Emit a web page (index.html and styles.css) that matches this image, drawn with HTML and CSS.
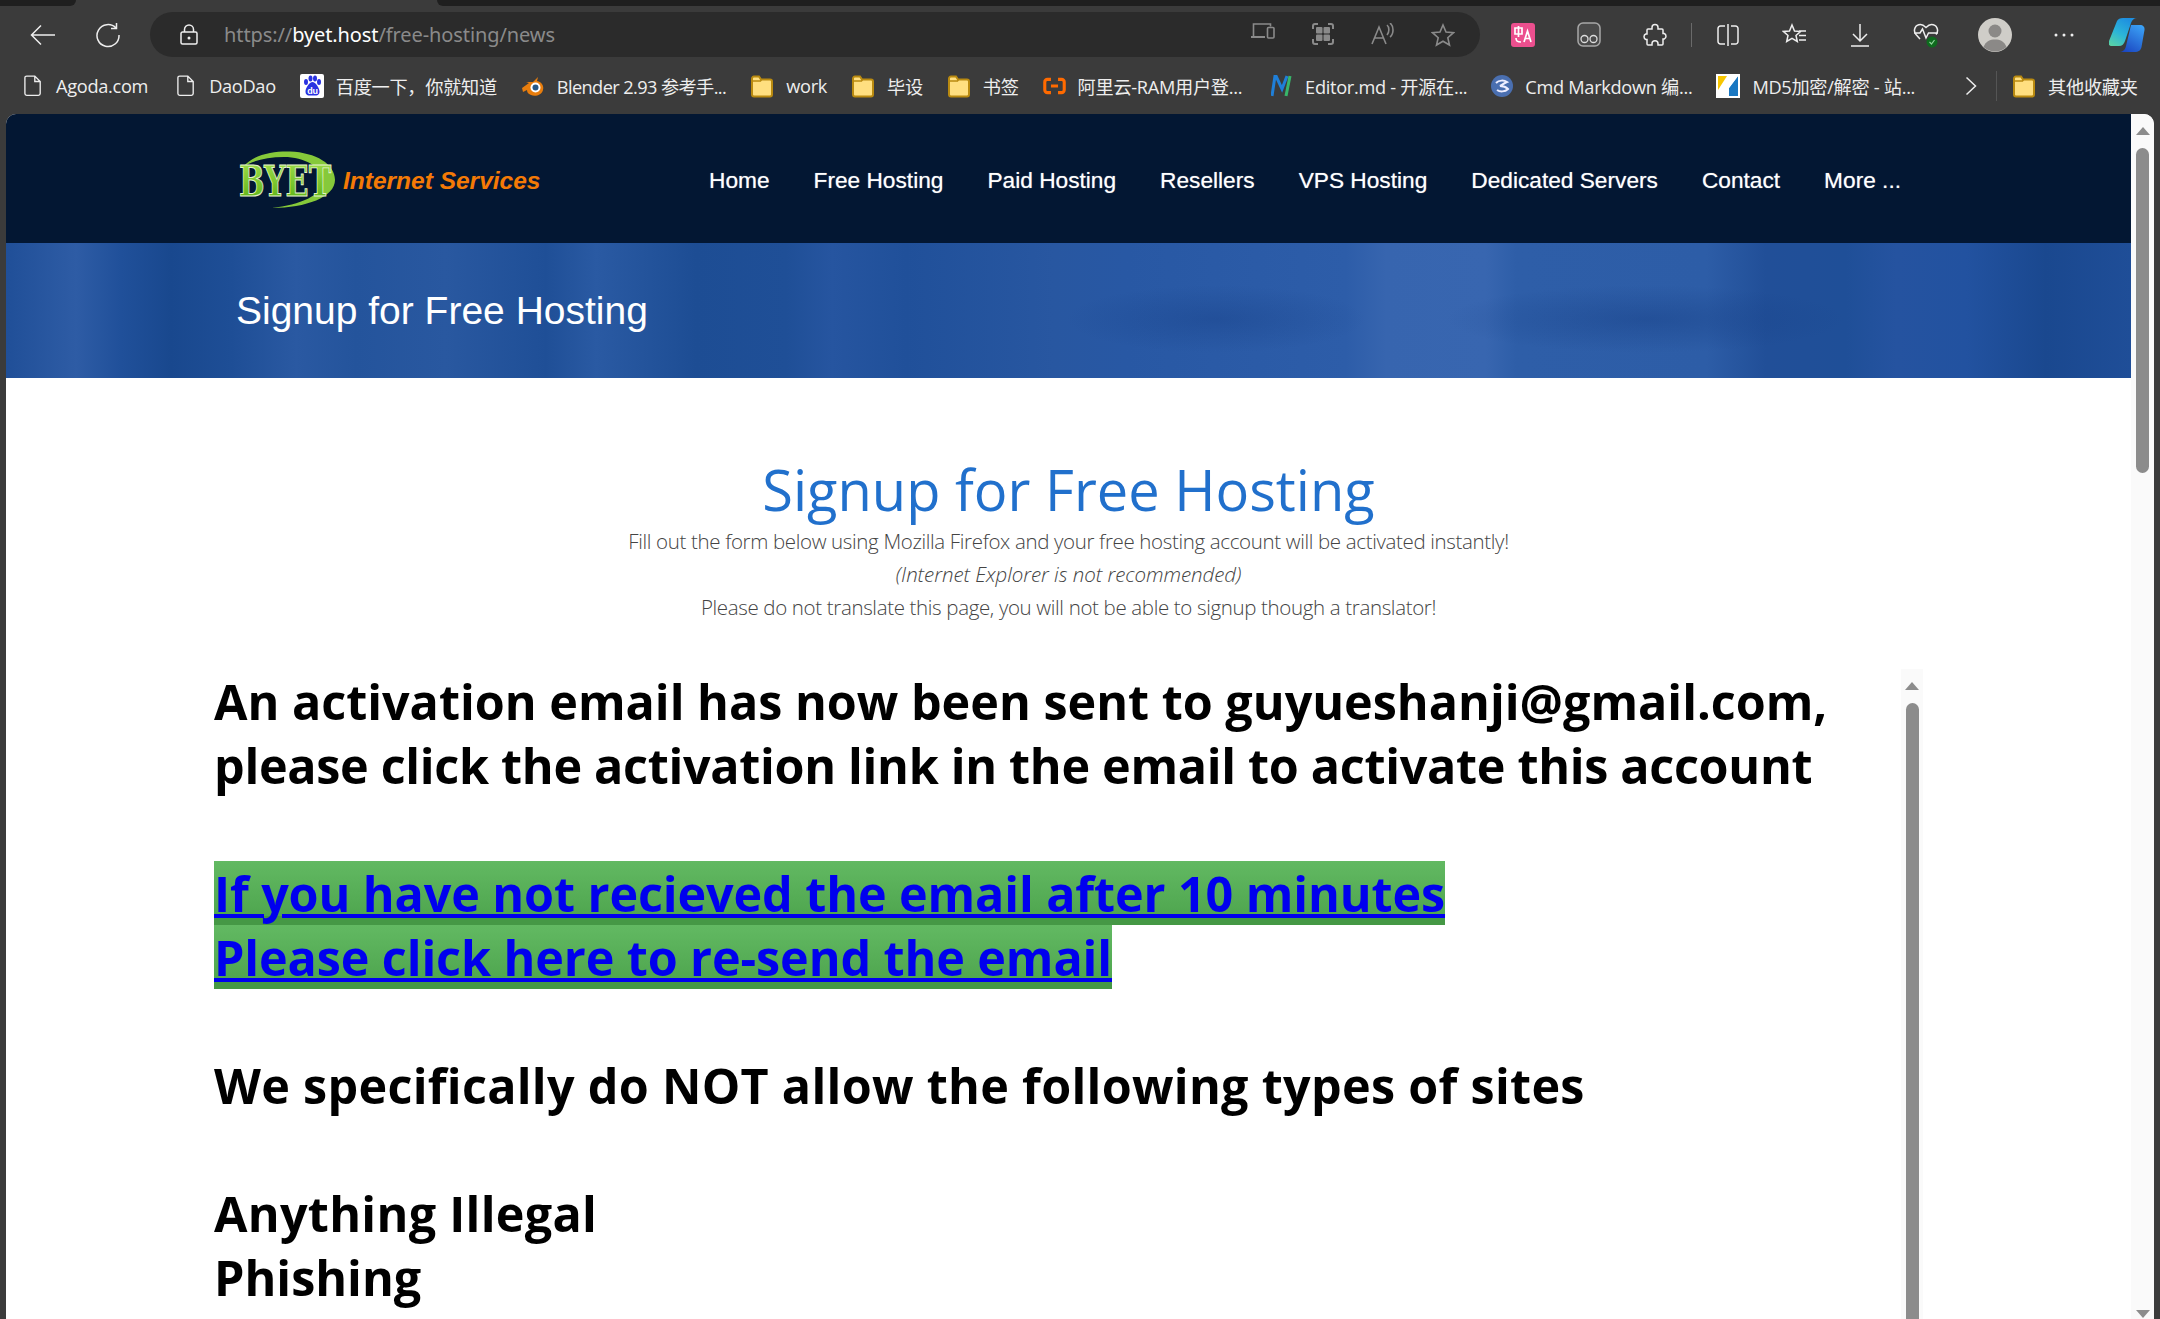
FILE: index.html
```html
<!DOCTYPE html>
<html lang="en">
<head>
<meta charset="utf-8">
<title>Signup for Free Hosting</title>
<link rel="stylesheet" href="styles.css">
</head>
<body>
<svg class="defs" width="0" height="0">
  <symbol id="folder" viewBox="0 0 24 24"><path d="M2 4.500a2 2 0 0 1 2-2h5l2 3h9a2 2 0 0 1 2 2v13a2 2 0 0 1-2 2H4a2 2 0 0 1-2-2z" fill="#ffdf80" stroke="#b98a10" stroke-width="2"/><path d="M2 7h8.500l1-1.500" fill="none" stroke="#b98a10" stroke-width="1.500"/></symbol>
  <symbol id="file" viewBox="0 0 20 24"><path d="M3 1.500h9l6 6v13.500a2 2 0 0 1-2 2H3a2 2 0 0 1-2-2V3.500a2 2 0 0 1 2-2zM12 1.500v6h6" fill="none" stroke="#eee" stroke-width="1.500"/></symbol>
</svg>
<div class="browser">
  <div class="tabstrip"><div class="tab-dark tab-left"></div><div class="tab-active"></div><div class="tab-dark tab-right"></div></div>
  <div class="toolbar">
    <div class="slot slot-nav"><svg width="26" height="22" viewBox="0 0 26 22"><path d="M25 11H2M11 1.500 1.500 11l9.500 9.500" class="line"/></svg></div>
    <div class="slot slot-nav"><svg width="26" height="26" viewBox="0 0 26 26"><path d="M21 6A11 11 0 1 0 24 13M21.500 1v5.500H16" class="line"/></svg></div>
    <div class="address">
      <svg class="lock" width="18" height="22" viewBox="0 0 18 22"><path d="M4.500 8V5.500a4.500 4.500 0 0 1 9 0V8M2.500 8h13a1.500 1.500 0 0 1 1.500 1.500v9a1.500 1.500 0 0 1-1.500 1.500h-13A1.500 1.500 0 0 1 1 18.500v-9A1.500 1.500 0 0 1 2.500 8z" class="line"/><circle cx="9" cy="14" r="1.500" fill="#eee"/></svg>
      <div class="url">https://<b>byet.host</b>/free-hosting/news</div>
      <div class="addr-icons">
        <div class="slot-addr"><svg width="24" height="16" viewBox="0 0 24 16"><path d="M2.500 13V1h17v2.500" class="dim"/><path d="M0 14h14" class="dim dim-thick"/><rect x="16.500" y="4.500" width="6.500" height="10.500" rx="1" class="dim"/></svg></div>
        <div class="slot-addr"><svg width="22" height="22" viewBox="0 0 22 22"><path d="M1 6V3a2 2 0 0 1 2-2h3M16 1h3a2 2 0 0 1 2 2v3M21 16v3a2 2 0 0 1-2 2h-3M6 21H3a2 2 0 0 1-2-2v-3" class="dim dim-thick"/><rect x="4" y="4" width="6.500" height="6.500" rx="1" fill="#8a8a8a"/><rect x="11.500" y="4" width="6.500" height="6.500" rx="1" fill="#8a8a8a"/><rect x="4" y="11.500" width="6.500" height="6.500" rx="1" fill="#8a8a8a"/><rect x="11.500" y="11.500" width="6.500" height="6.500" rx="1" fill="#8a8a8a"/></svg></div>
        <div class="slot-addr"><svg width="24" height="22" viewBox="0 0 24 22"><path d="M1 21 8 4l7 17M3.500 15h9M16 2c2.500 2 2.500 7 0 10M19 0c4 3 4 11 0 14" class="dim"/></svg></div>
        <div class="slot-addr"><svg width="24" height="24" viewBox="0 0 24 24"><path d="m12 2 3 7 7.500.7-5.700 5 1.700 7.300L12 18.200 5.500 22l1.700-7.300-5.700-5L9 9z" class="dim"/></svg></div>
      </div>
    </div>
    <div class="tools">
      <div class="slot"><svg width="24" height="24" viewBox="0 0 24 24"><rect width="24" height="24" rx="3" fill="#ec4f8e"/><path d="M4 5h7v6H4zM7.500 3v11M5 15c0 3 1 4 5 4M13 19l3.500-11L20 19M14 15.500h5" fill="none" stroke="#fff" stroke-width="1.700"/></svg></div>
      <div class="slot"><svg width="24" height="25" viewBox="0 0 24 25"><rect x="1" y="1" width="22" height="23" rx="5" fill="#4a4a4a" stroke="#a8a8a8" stroke-width="1.500"/><circle cx="7.500" cy="17" r="3.500" fill="none" stroke="#ddd" stroke-width="1.300"/><circle cx="16.500" cy="17" r="3.500" fill="none" stroke="#ddd" stroke-width="1.300"/></svg></div>
      <div class="slot"><svg width="24" height="24" viewBox="0 0 24 24"><path d="M9 4.500a3 3 0 0 1 6 0V6h4a1 1 0 0 1 1 1v3.500h1.200a3 3 0 0 1 0 5.500H20v5a1 1 0 0 1-1 1h-4v-1.200a3 3 0 0 0-6 0V22H5a1 1 0 0 1-1-1v-4.500H2.800a3 3 0 0 1 0-5.500H4V7a1 1 0 0 1 1-1h4z" class="line"/></svg></div>
      <div class="divider"></div>
      <div class="slot"><svg width="22" height="22" viewBox="0 0 22 22"><path d="M8 2H3.500A2.500 2.500 0 0 0 1 4.500v13A2.500 2.500 0 0 0 3.500 20H8M14 2h4.500A2.500 2.500 0 0 1 21 4.500v13a2.500 2.500 0 0 1-2.500 2.500H14M11 0v22" class="line"/></svg></div>
      <div class="slot"><svg width="25" height="24" viewBox="0 0 25 24"><path d="m10 2 2.500 6 6 .5-4.500 4 1.300 6-5.300-3.200-5.300 3.200 1.300-6-4.500-4 6-.5zM17 8h7M17 12.500h7M17 17h7" class="line"/></svg></div>
      <div class="slot"><svg width="20" height="24" viewBox="0 0 20 24"><path d="M10 1v17M3 11l7 7 7-7M1 23h18" class="line"/></svg></div>
      <div class="slot"><svg width="26" height="26" viewBox="0 0 26 26"><path d="M7 17 3 12.500C-.5 8 2.500 2.500 7.500 2.500c2.500 0 4 1.500 5.500 3 1.500-1.500 3-3 5.500-3 5 0 8 5.500 4.500 10M1 11h6l2.500-4 3.500 9 2.500-5H25" class="line"/><circle cx="19" cy="20" r="5.500" fill="#0e6b1e"/><path d="m16.500 20 2 2 3-4" fill="none" stroke="#8fd39a" stroke-width="1.200"/></svg></div>
      <div class="slot slot-avatar"><svg width="34" height="34" viewBox="0 0 34 34"><circle cx="17" cy="17" r="17" fill="#cfcdc8"/><circle cx="17" cy="13" r="6.500" fill="#8b8987"/><path d="M5.500 29C8 23 12 21.500 17 21.500S26 23 28.500 29A17 17 0 0 1 5.500 29z" fill="#8b8987"/></svg></div>
      <div class="slot"><svg width="20" height="4" viewBox="0 0 20 4"><circle cx="2" cy="2" r="1.500" fill="#eee"/><circle cx="10" cy="2" r="1.500" fill="#eee"/><circle cx="18" cy="2" r="1.500" fill="#eee"/></svg></div>
      <div class="slot slot-copilot"><svg width="36" height="34" viewBox="0 0 36 34"><defs><linearGradient id="cpa" x1="0" y1="1" x2=".6" y2="0"><stop offset="0" stop-color="#5fd6a0"/><stop offset=".5" stop-color="#2cb5d8"/><stop offset="1" stop-color="#1e8fe0"/></linearGradient><linearGradient id="cpb" x1=".8" y1="0" x2=".2" y2="1"><stop offset="0" stop-color="#3aa0f5"/><stop offset="1" stop-color="#1a45c0"/></linearGradient></defs><path d="M8 3C9 1 11 0 14 0h14c-3 0-5 2-6 5l-6 18c-1 3-3 5-6 5H3c-3 0-4-2-3-5z" fill="url(#cpa)"/><path d="M22 7h9c3 0 5 2 4.500 5l-3 17c-.5 3-3 5-7 5H9c5 0 7-2 8-6z" fill="url(#cpb)"/></svg></div>
    </div>
  </div>
  <div class="bookmarks">
    <div class="bm"><svg class="ic-file" width="18" height="23"><use href="#file"/></svg><span>Agoda.com</span></div>
    <div class="bm"><svg class="ic-file" width="18" height="23"><use href="#file"/></svg><span>DaoDao</span></div>
    <div class="bm"><svg width="24" height="24" viewBox="0 0 24 24"><rect width="24" height="24" rx="2" fill="#fff"/><g fill="#2932e1"><ellipse cx="6" cy="8" rx="2" ry="3"/><ellipse cx="10.500" cy="4.500" rx="2" ry="3"/><ellipse cx="15" cy="4.500" rx="2" ry="3"/><ellipse cx="19" cy="8" rx="2" ry="3"/><path d="M12.500 8c3 0 7 6 7 9.500 0 5-5 4-7 4s-7 1-7-4C5.500 14 9.500 8 12.500 8z"/></g><text x="12.500" y="20" class="du">du</text></svg><span>百度一下，你就知道</span></div>
    <div class="bm bm-tight"><svg width="24" height="24" viewBox="0 0 24 24"><path d="M1 14 8 9 5 8h7l5-5-1 4c5 1 7 5 6 9-1 5-8 7-12 5-3-1-4-3-4-5l-4 2z" fill="#e87d0d"/><circle cx="14.500" cy="13.500" r="5" fill="#fff"/><circle cx="14.500" cy="13.500" r="3" fill="#265787"/></svg><span>Blender 2.93 参考手...</span></div>
    <div class="bm"><svg width="24" height="24"><use href="#folder"/></svg><span>work</span></div>
    <div class="bm"><svg width="24" height="24"><use href="#folder"/></svg><span>毕设</span></div>
    <div class="bm"><svg width="24" height="24"><use href="#folder"/></svg><span>书签</span></div>
    <div class="bm bm-wide"><svg width="23" height="18" viewBox="0 0 26 20"><path d="M9 2.500H5A3 3 0 0 0 2 5.500v9a3 3 0 0 0 3 3h4M17 2.500h4a3 3 0 0 1 3 3v9a3 3 0 0 1-3 3h-4M9 10h8" fill="none" stroke="#ff6a00" stroke-width="3.500"/></svg><span>阿里云-RAM用户登...</span></div>
    <div class="bm"><svg width="22" height="22" viewBox="0 0 22 22"><path d="M1 21 4 1h1l6 13 5-13" fill="none" stroke="#1f7fd8" stroke-width="3"/><path d="M19 1l-4 20" stroke="#38b56a" stroke-width="3"/></svg><span>Editor.md - 开源在...</span></div>
    <div class="bm"><svg width="22" height="22" viewBox="0 0 22 22"><circle cx="11" cy="11" r="11" fill="#4a6fb0"/><path d="M5 8c3-3 8-3 11-1-3 1-5 3-7 4 3 0 6 1 8 3-3 3-8 3-11 1" fill="none" stroke="#eef" stroke-width="2"/></svg><span>Cmd Markdown 编...</span></div>
    <div class="bm"><svg width="24" height="24" viewBox="0 0 24 24"><rect width="24" height="24" fill="#fff"/><path d="M2 2h9v20H2v-8z" fill="#f7c600"/><path d="M11 2 2 16v6h9z" fill="#fff"/><path d="M13 22h9V2h0l-9 12z" fill="#1a78c2"/><path d="M22 2h-9v12z" fill="#fff"/></svg><span>MD5加密/解密 - 站...</span></div>
    <div class="bm-more"><svg width="12" height="20" viewBox="0 0 12 20"><path d="m1.500 1.500 9 8.500-9 8.500" class="line"/></svg></div>
    <div class="bm-div"></div>
    <div class="bm bm-last"><svg width="24" height="24"><use href="#folder"/></svg><span>其他收藏夹</span></div>
  </div>
  <div class="viewport">
    <div class="page">
      <header class="site-header">
        <svg class="logo" width="320" height="62" viewBox="0 0 320 62">
          <defs><linearGradient id="lg" x1="0" y1="0" x2="0" y2="1"><stop offset="0" stop-color="#a4e24e"/><stop offset="1" stop-color="#55ad10"/></linearGradient></defs>
          <path d="M5 19C16 6 36 3 52 3.500 78 4.500 97 16 97 32 97 49 68 60 34 60 62 57 85 47 85 33 85 19 66 9 46 9 28 9 14 13 5 19z" fill="#86c93a"/>
          <g transform="translate(1 48) scale(.72 1)"><text class="logo-byet">BYET</text></g>
          <text x="105" y="41" class="logo-is">Internet Services</text>
        </svg>
        <nav class="nav">
          <a>Home</a><a>Free Hosting</a><a>Paid Hosting</a><a>Resellers</a><a>VPS Hosting</a><a>Dedicated Servers</a><a>Contact</a><a>More ...</a>
        </nav>
      </header>
      <section class="banner"><h1>Signup for Free Hosting</h1></section>
      <main class="content">
        <h2>Signup for Free Hosting</h2>
        <p>Fill out the form below using Mozilla Firefox and your free hosting account will be activated instantly!</p>
        <p class="note"><i>(Internet Explorer is not recommended)</i></p>
        <p>Please do not translate this page, you will not be able to signup though a translator!</p>
        <div class="frame">
          <div class="frame-body">
            <div class="t">An activation email has now been sent to guyueshanji@gmail.com,</div>
            <div class="t t-tight">please click the activation link in the email to activate this account</div>
            <div class="t">&nbsp;</div>
            <a class="t hl">If you have not recieved the email after 10 minutes</a>
            <a class="t hl">Please click here to re-send the email</a>
            <div class="t">&nbsp;</div>
            <div class="t t-loose">We specifically do NOT allow the following types of sites</div>
            <div class="t">&nbsp;</div>
            <div class="t t-loose">Anything Illegal</div>
            <div class="t">Phishing</div>
          </div>
          <div class="frame-bar"><div class="arrow-up"></div><div class="thumb"></div></div>
        </div>
      </main>
    </div>
    <div class="page-bar"><div class="arrow-up"></div><div class="thumb thumb-page"></div><div class="arrow-down"></div></div>
  </div>
</div>
</body>
</html>
```
FILE: styles.css
```css
* { box-sizing: border-box; }
html, body { margin: 0; height: 100%; overflow: hidden; }
body { background: #3b3b3b; font-family: "Open Sans", "Noto Sans CJK SC", sans-serif; }
.defs { position: absolute; }
.browser { height: 100vh; display: flex; flex-direction: column; background: #3b3b3b; }
svg { display: block; flex: none; }
.line { fill: none; stroke: #eee; stroke-width: 1.5; }
.dim { fill: none; stroke: #8a8a8a; stroke-width: 1.6; }
.dim-thick { stroke-width: 2; }

.tabstrip { height: 6px; display: flex; }
.tab-dark { background: #1f1f1f; }
.tab-left { width: 76px; border-radius: 0 0 6px 0; }
.tab-active { width: 361px; }
.tab-right { flex: 1; border-radius: 0 0 0 6px; }

.toolbar { height: 51px; padding: 6px 0 0 10px; display: flex; align-items: center; }
.slot { width: 66px; height: 45px; display: flex; flex: none; align-items: center; justify-content: center; }
.slot-nav { width: 65px; }
.slot-avatar { margin-left: 3px; margin-right: 3px; }
.slot-copilot { width: 60px; }
.address { flex: none; width: 1330px; height: 45px; margin-left: 10px; margin-right: 10px; border-radius: 23px; background: #2b2b2b; display: flex; align-items: center; padding-left: 30px; }
.lock { margin-right: 26px; }
.url { color: #8a8a8a; font-size: 20px; font-family: "Noto Sans", sans-serif; letter-spacing: -0.1px; }
.url b { font-weight: 400; color: #fff; }
.addr-icons { margin-left: auto; display: flex; padding-right: 7px; }
.slot-addr { width: 60px; display: flex; justify-content: center; }
.tools { display: flex; align-items: center; }
.divider { width: 1px; height: 24px; background: #6a6a6a; margin: 0 3px 0 3px; }

.bookmarks { height: 57px; display: flex; align-items: center; padding: 0 0 0 19px; color: #eee; font-size: 18.200px; font-family: "Open Sans", "Noto Sans CJK SC", sans-serif; letter-spacing: -0.3px; white-space: nowrap; }
.bm { display: flex; align-items: center; gap: 12px; margin-right: 24px; }
.bm-tight { letter-spacing: -0.6px; }
.bm-wide { margin-right: 29px; }
.ic-file { margin-left: 5px; margin-right: 2px; }
.bm-more { margin-left: 26px; }
.bm-div { width: 1px; height: 30px; background: #555; margin-left: 19px; margin-right: 15px; }
.bm-last { margin-right: 0; }
.du { font: bold 9px "Liberation Sans", sans-serif; fill: #fff; text-anchor: middle; }

.viewport { flex: 1; min-height: 0; margin: 0 6px; display: flex; border-radius: 10px 10px 0 0; overflow: hidden; background: #fff; }
.page { flex: 1; min-width: 0; overflow: hidden; }
.site-header { height: 129px; background: #031733; display: flex; align-items: center; padding-left: 232px; }
.logo-byet { font: bold 42px "DejaVu Serif", serif; fill: url(#lg); stroke: #e4f3c8; stroke-width: 1px; }
.logo-is { font: italic bold 24.500px "Liberation Sans", sans-serif; fill: #f47a06; }
.nav { display: flex; gap: 44px; margin-left: 151px; padding-top: 3px; }
.nav a { color: #fff; font: 22.700px "Liberation Sans", sans-serif; white-space: nowrap; text-shadow: 0 0 1px rgba(255, 255, 255, .6); }
.banner { height: 135px; display: flex; align-items: center; padding-left: 230px; background-color: #1f4f98;
  background-image:
    radial-gradient(ellipse 150px 34px at 1210px 76px, rgba(20, 60, 130, .35), transparent),
    radial-gradient(ellipse 200px 34px at 1640px 76px, rgba(20, 60, 130, .4), transparent),
    linear-gradient(90deg, #204f98 0, #2e5ca5 70px, #20509a 115px, #19488e 165px, #1e4e96 225px, #2a59a2 290px, #24549c 350px, #2958a0 440px, #1f4f97 540px, #2a5aa3 590px, #1d4d94 690px, #1f4f97 780px, #2655a0 826px, #20509a 900px, #2857a1 1047px, #2858a4 1120px, #2d5da9 1340px, #3765af 1380px, #3866b0 1480px, #2e5ea8 1510px, #2d5da7 1700px, #214f98 1760px, #1f4f98 1840px, #2553a0 1890px, #2252a0 1960px, #1a488f 2040px, #1f4e98 2125px);
}
.banner h1 { margin: 0; color: #fff; font: 39px "Liberation Sans", sans-serif; }
.content { text-align: center; padding-top: 75px; }
.content h2 { margin: 0; font-size: 56px; line-height: 72px; font-weight: 400; color: #2170cc; }
.content p { margin: 0; font-size: 20.500px; line-height: 33px; font-weight: 300; color: #444; letter-spacing: -0.35px; }
.content .note { letter-spacing: -0.05px; }
.frame { display: flex; margin-top: 45px; padding-left: 208px; text-align: left; }
.frame-body { width: 1687px; flex: none; }
.t { display: block; font-size: 48.500px; line-height: 64px; font-weight: 700; color: #000; white-space: nowrap; }
.t-tight { letter-spacing: -0.3px; }
.t-loose { letter-spacing: 0.3px; }
.hl { width: fit-content; color: #0000ee; letter-spacing: -0.1px; text-decoration: underline; text-decoration-thickness: 4px; background: linear-gradient(180deg, #62b962, #4fa64f 86%, #459845 86%); }
.frame-bar { width: 22px; height: 700px; background: #fafafa; display: flex; flex-direction: column; align-items: center; padding-top: 13px; }
.frame-bar .thumb { margin-top: 13px; flex: 1; }
.thumb { width: 13px; background: #8c8c8c; border-radius: 7px 7px 0 0; }
.arrow-up, .arrow-down { width: 0; height: 0; border-left: 7.500px solid transparent; border-right: 7.500px solid transparent; flex: none; }
.arrow-up { border-bottom: 8px solid #8c8c8c; }
.arrow-down { border-top: 8px solid #8c8c8c; margin-top: auto; margin-bottom: 1px; }
.page-bar { width: 23px; background: #fafafa; display: flex; flex-direction: column; align-items: center; padding-top: 13px; }
.thumb-page { height: 325px; margin-top: 13px; border-radius: 7px; }
```
